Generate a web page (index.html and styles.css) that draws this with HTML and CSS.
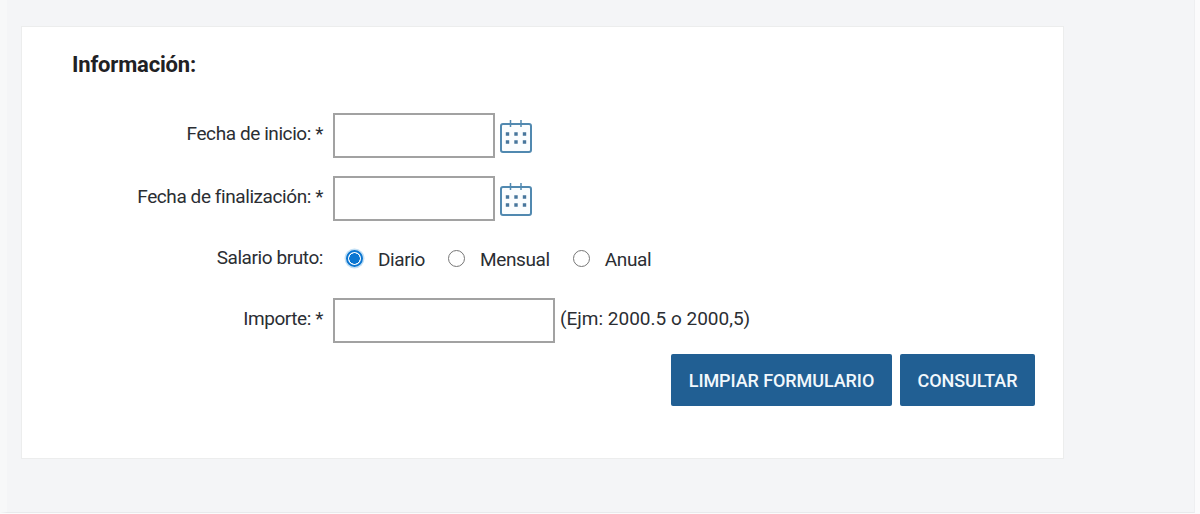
FILE: index.html
```html
<!DOCTYPE html>
<html lang="es">
<head>
<meta charset="utf-8">
<title>Información</title>
<link rel="stylesheet" href="styles.css">
</head>
<body>
<main class="frame">
  <section class="card">
    <h2 class="title">Información:</h2>
    <form class="form">
      <div class="row row-input">
        <label class="label">Fecha de inicio: *</label>
        <input class="field field-date" type="text">
        <svg class="cal" viewBox="0 0 34 34" width="34" height="34" aria-hidden="true">
          <rect x="2" y="4" width="30" height="28" rx="2" fill="#fbfdfe" stroke="#5189b0" stroke-width="2"/>
          <path d="M11.500 0V7M22 0V7" fill="none" stroke="#5189b0" stroke-width="1.500"/>
          <path d="M6.800 12.300h3.400v3.400h-3.400zM15.300 12.300h3.400v3.400h-3.400zM23.800 12.300h3.400v3.400h-3.400zM6.800 20.300h3.400v3.400h-3.400zM15.300 20.300h3.400v3.400h-3.400zM23.800 20.300h3.400v3.400h-3.400z" fill="#47769c"/>
        </svg>
      </div>
      <div class="row row-input">
        <label class="label">Fecha de finalización: *</label>
        <input class="field field-date" type="text">
        <svg class="cal" viewBox="0 0 34 34" width="34" height="34" aria-hidden="true">
          <rect x="2" y="4" width="30" height="28" rx="2" fill="#fbfdfe" stroke="#5189b0" stroke-width="2"/>
          <path d="M11.500 0V7M22 0V7" fill="none" stroke="#5189b0" stroke-width="1.500"/>
          <path d="M6.800 12.300h3.400v3.400h-3.400zM15.300 12.300h3.400v3.400h-3.400zM23.800 12.300h3.400v3.400h-3.400zM6.800 20.300h3.400v3.400h-3.400zM15.300 20.300h3.400v3.400h-3.400zM23.800 20.300h3.400v3.400h-3.400z" fill="#47769c"/>
        </svg>
      </div>
      <div class="row row-radio">
        <span class="label label-radio">Salario bruto:</span>
        <div class="radios">
          <label class="radio radio-first"><input type="radio" name="salario" checked><span>Diario</span></label>
          <label class="radio"><input type="radio" name="salario"><span>Mensual</span></label>
          <label class="radio"><input type="radio" name="salario"><span>Anual</span></label>
        </div>
      </div>
      <div class="row row-input">
        <label class="label">Importe: *</label>
        <input class="field field-amount" type="text">
        <span class="hint">(Ejm: 2000.5 o 2000,5)</span>
      </div>
      <div class="actions">
        <button class="btn btn-wide" type="reset">LIMPIAR FORMULARIO</button>
        <button class="btn btn-narrow" type="button">CONSULTAR</button>
      </div>
    </form>
  </section>
</main>
</body>
</html>
```
FILE: styles.css
```css
* { box-sizing: border-box; }
html, body { margin: 0; height: 100%; background: #fbfbfc; overflow: hidden; }
body { font-family: Roboto, "Liberation Sans", sans-serif; color: #2b2e33; }
.frame {
  width: 1195px;
  height: 513px;
  background: #f4f5f7;
  border-left: 7px solid #f7f8f9;
  border-right: 1px solid #eeeff1;
  border-bottom: 1px solid #e9eaec;
  padding: 26px 0 0 14px;
}
.card {
  width: 1043px;
  height: 433px;
  background: #fff;
  border: 1px solid #eceded;
  padding: 26px 28px 0 50px;
}
.title {
  margin: 0 0 36px;
  font-size: 22px;
  line-height: 24px;
  font-weight: 700;
  letter-spacing: -0.18px;
  color: #1f2124;
}
.row { display: flex; align-items: center; }
.row-input { height: 45px; margin-bottom: 18px; }
.row-radio { height: 24px; margin-top: 26px; margin-bottom: 27px; }
.label {
  width: 251px;
  margin-right: 10px;
  flex: none;
  text-align: right;
  font-size: 19px;
  letter-spacing: -0.42px;
  line-height: 24px;
  position: relative;
  top: -2px;
}
.label-radio { top: -1px; }
.field {
  height: 45px;
  flex: none;
  border: 2px solid #a2a2a2;
  background: #fff;
  margin: 0;
  padding: 0 6px;
}
.field-date { width: 162px; }
.field-amount { width: 222px; }
.cal { margin: 7px 0 0 4px; flex: none; align-self: flex-start; }
.radios { display: flex; align-items: center; }
.radio { display: flex; align-items: center; font-size: 19px; letter-spacing: -0.38px; margin-left: 23px; }
.radio-first { margin-left: 13px; }
.radio input {
  appearance: none;
  width: 17px;
  height: 17px;
  margin: 0 15px 0 0;
  flex: none;
  border: 1px solid #767676;
  border-radius: 50%;
  background: #fff;
  position: relative;
  top: -1px;
}
.radio input:checked {
  border: 2px solid #0b76d1;
  background: radial-gradient(circle, #0b76d1 0 5px, #fff 5.5px);
  box-shadow: 0 0 0 1.5px #c3e0f5;
}
.radio span { position: relative; top: 0; }
.hint { margin-left: 5px; font-size: 19px; line-height: 24px; position: relative; top: -2px; }
.actions { display: flex; justify-content: flex-end; gap: 8px; margin-top: -7px; }
.btn {
  height: 52px;
  border: 0;
  border-radius: 2px;
  background: #215f93;
  color: #f2f8fc;
  font-family: Roboto, "Liberation Sans", sans-serif;
  font-size: 18px;
  font-weight: 500;
  letter-spacing: -0.08px;
  padding: 0;
}
.btn-wide { width: 221px; }
.btn-narrow { width: 135px; }
```
